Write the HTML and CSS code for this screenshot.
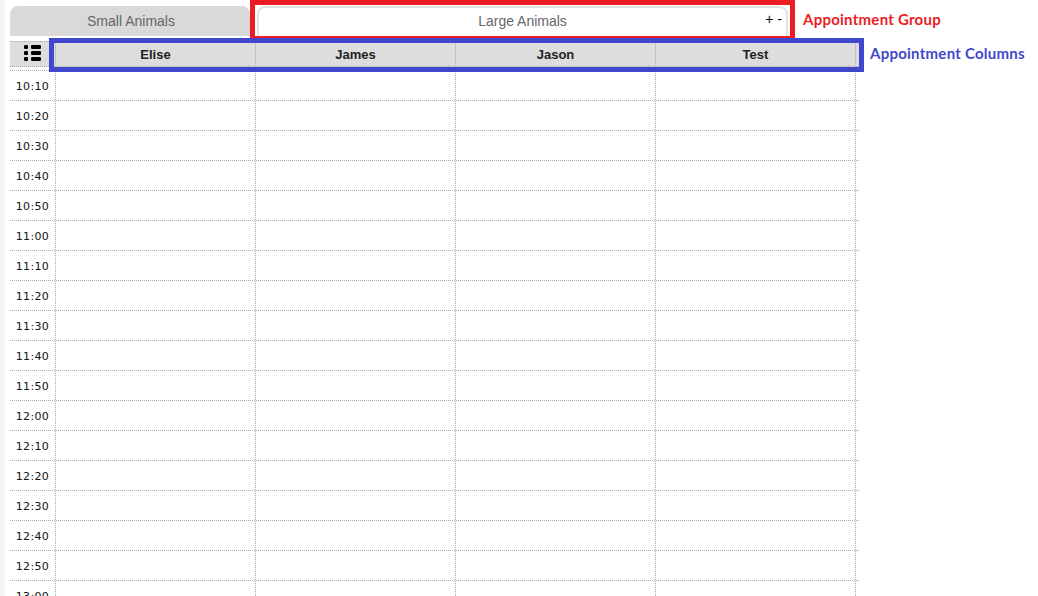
FILE: index.html
```html
<!DOCTYPE html>
<html>
<head>
<meta charset="utf-8">
<title>Appointments</title>
<link rel="stylesheet" href="styles.css">
</head>
<body>
<div class="page">
  <div class="tabs">
    <div class="tab tab-off">Small Animals</div>
    <div class="tab tab-on">Large Animals<span class="zoom">+ -</span></div>
  </div>
  <div class="head">
    <div class="head-time">
      <svg width="17" height="16" viewBox="0 0 17 16"><g fill="#000"><rect x="0" y="0" width="4" height="4" rx="1.3"/><rect x="7" y="0" width="10" height="4" rx="1.3"/><rect x="0" y="6" width="4" height="4" rx="1.3"/><rect x="7" y="6" width="10" height="4" rx="1.3"/><rect x="0" y="12" width="4" height="4" rx="1.3"/><rect x="7" y="12" width="10" height="4" rx="1.3"/></g></svg>
    </div>
    <div class="head-col">Elise</div>
    <div class="head-col">James</div>
    <div class="head-col">Jason</div>
    <div class="head-col">Test</div>
  </div>
  <div class="grid" id="grid">
    <div class="row"><div class="time">10:10</div><div class="cell"></div><div class="cell"></div><div class="cell"></div><div class="cell"></div></div>
    <div class="row"><div class="time">10:20</div><div class="cell"></div><div class="cell"></div><div class="cell"></div><div class="cell"></div></div>
    <div class="row"><div class="time">10:30</div><div class="cell"></div><div class="cell"></div><div class="cell"></div><div class="cell"></div></div>
    <div class="row"><div class="time">10:40</div><div class="cell"></div><div class="cell"></div><div class="cell"></div><div class="cell"></div></div>
    <div class="row"><div class="time">10:50</div><div class="cell"></div><div class="cell"></div><div class="cell"></div><div class="cell"></div></div>
    <div class="row"><div class="time">11:00</div><div class="cell"></div><div class="cell"></div><div class="cell"></div><div class="cell"></div></div>
    <div class="row"><div class="time">11:10</div><div class="cell"></div><div class="cell"></div><div class="cell"></div><div class="cell"></div></div>
    <div class="row"><div class="time">11:20</div><div class="cell"></div><div class="cell"></div><div class="cell"></div><div class="cell"></div></div>
    <div class="row"><div class="time">11:30</div><div class="cell"></div><div class="cell"></div><div class="cell"></div><div class="cell"></div></div>
    <div class="row"><div class="time">11:40</div><div class="cell"></div><div class="cell"></div><div class="cell"></div><div class="cell"></div></div>
    <div class="row"><div class="time">11:50</div><div class="cell"></div><div class="cell"></div><div class="cell"></div><div class="cell"></div></div>
    <div class="row"><div class="time">12:00</div><div class="cell"></div><div class="cell"></div><div class="cell"></div><div class="cell"></div></div>
    <div class="row"><div class="time">12:10</div><div class="cell"></div><div class="cell"></div><div class="cell"></div><div class="cell"></div></div>
    <div class="row"><div class="time">12:20</div><div class="cell"></div><div class="cell"></div><div class="cell"></div><div class="cell"></div></div>
    <div class="row"><div class="time">12:30</div><div class="cell"></div><div class="cell"></div><div class="cell"></div><div class="cell"></div></div>
    <div class="row"><div class="time">12:40</div><div class="cell"></div><div class="cell"></div><div class="cell"></div><div class="cell"></div></div>
    <div class="row"><div class="time">12:50</div><div class="cell"></div><div class="cell"></div><div class="cell"></div><div class="cell"></div></div>
    <div class="row"><div class="time">13:00</div><div class="cell"></div><div class="cell"></div><div class="cell"></div><div class="cell"></div></div>
  </div>
  <div class="mark mark-red"></div>
  <div class="mark mark-blue"></div>
  <div class="label label-red">Appointment Group</div>
  <div class="label label-blue">Appointment Columns</div>
</div>
</body>
</html>
```
FILE: styles.css
```css
html, body { margin: 0; padding: 0; height: 100%; overflow: hidden; background: #fff; }
.page {
  position: relative;
  height: 596px;
  overflow: hidden;
  box-sizing: border-box;
  padding: 6px 0 0 10px;
  font-family: "Liberation Sans", Arial, sans-serif;
}
.page::before {
  content: "";
  position: absolute;
  left: 0; top: 0; bottom: 0;
  width: 5px;
  background: #f5f5f5;
}
.tabs { display: flex; gap: 7px; height: 30px; }
.tab {
  box-sizing: border-box;
  height: 30px;
  line-height: 30px;
  text-align: center;
  font-size: 14px;
  color: #666;
  border-radius: 8px 8px 0 0;
  position: relative;
}
.tab-off { width: 240px; background: #d9d9d9; padding-left: 2px; }
.tab-on { width: 531px; background: #fff; border: 2px solid #e2e2e2; border-bottom: 0; line-height: 26px; }
.zoom { position: absolute; right: 4px; top: -3px; font-size: 14px; line-height: 28px; color: #000; }
.head {
  display: flex;
  margin-top: 5px;
  margin-bottom: 3px;
  width: 849px;
  height: 26px;
  background: #ddd;
  border-top: 1px dotted #aaa;
  border-bottom: 1px dotted #aaa;
  box-sizing: border-box;
}
.head-time { width: 45px; display: flex; align-items: center; justify-content: center; box-sizing: border-box; padding-bottom: 2px; }
.head-col {
  width: 200px;
  box-sizing: border-box;
  border-left: 1px dotted #aaa;
  text-align: center;
  font-size: 13px;
  font-weight: bold;
  color: #222;
  line-height: 25px;
}
.head-col:last-child { border-right: 1px dotted #aaa; width: 201px; }
.grid { width: 849px; border-top: 1px dotted #aaa; }
.row { display: flex; height: 30px; box-sizing: border-box; border-bottom: 1px dotted #aaa; }
.time { width: 45px; text-align: center; font-size: 11px; letter-spacing: 0.35px; color: #111; line-height: 31px; font-family: "DejaVu Sans", sans-serif; }
.cell { width: 200px; box-sizing: border-box; border-left: 1px dotted #aaa; }
.cell:last-child { width: 201px; border-right: 1px dotted #aaa; }
.mark { position: absolute; box-sizing: border-box; border-style: solid; }
.mark-red { left: 250px; top: 0; width: 545px; height: 38px; border-width: 5px 5px 2px 5px; border-color: #ed1c24; }
.mark-blue { left: 49px; top: 38px; width: 815px; height: 34px; border-width: 5px; border-color: #3f48cc; }
.label { position: absolute; font-family: "Lato", sans-serif; font-weight: bold; font-size: 15px; white-space: nowrap; letter-spacing: 0.25px; }
.label-red { left: 803px; top: 10px; color: #ed1c24; }
.label-blue { left: 870px; top: 44px; color: #3f48cc; }
```
